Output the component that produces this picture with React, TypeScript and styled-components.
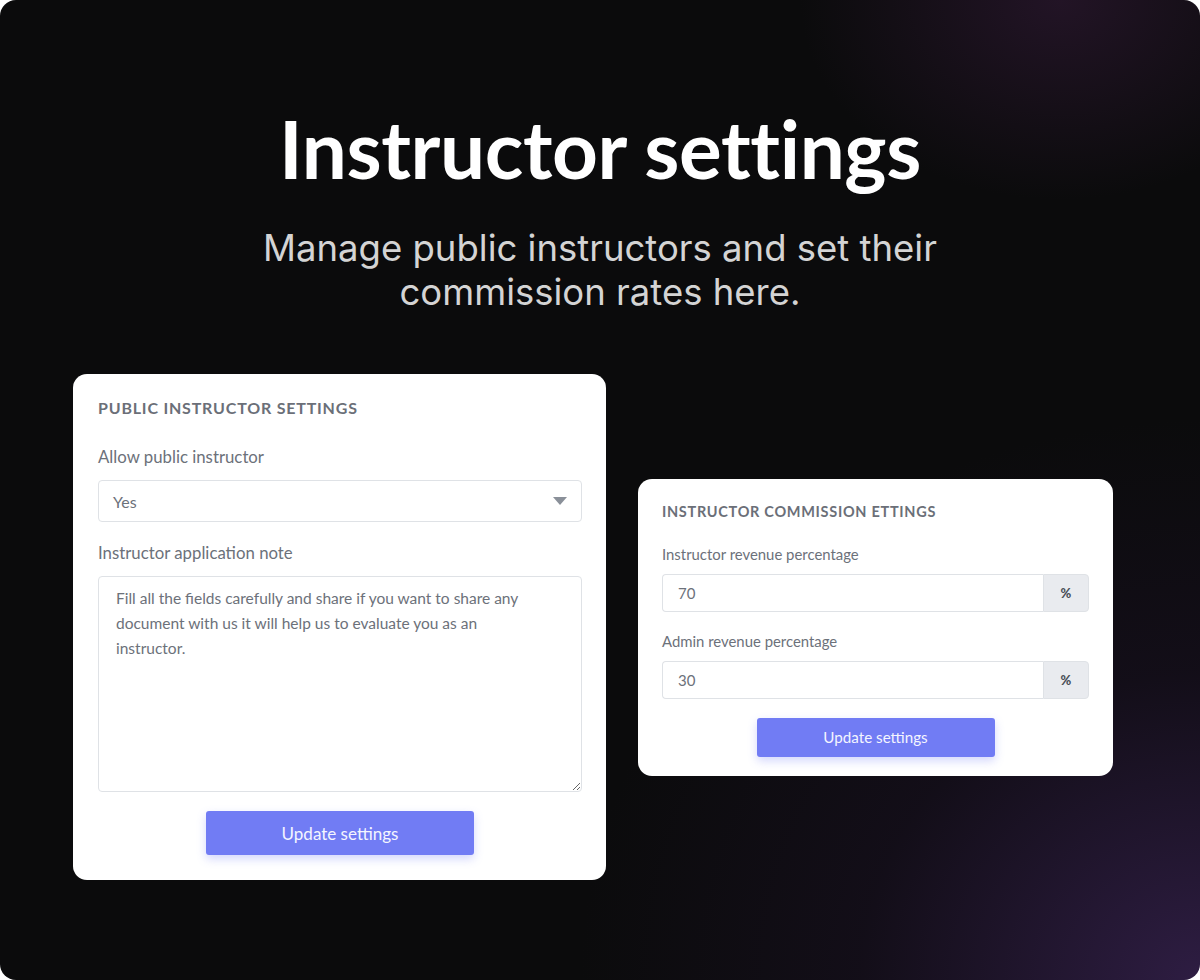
import React from 'react';
import styled, { createGlobalStyle } from 'styled-components';

const GlobalStyle = createGlobalStyle`
    html, body {
        margin: 0;
        padding: 0;
        background: #ffffff;
    }
    * {
        box-sizing: border-box;
    }
`;

function Field(props: { label: string; children: React.ReactNode; small?: boolean; spacing: number }) {
    const { label, children, small, spacing } = props;
    return (
        <FieldBox $spacing={spacing}>
            <Label $small={small}>{label}</Label>
            {children}
        </FieldBox>
    );
}

function PercentInput(props: { value: string }) {
    return (
        <InputGroup>
            <NumberInput readOnly defaultValue={props.value} />
            <Addon>%</Addon>
        </InputGroup>
    );
}

function App() {
    return (
        <>
            <GlobalStyle />
            <Stage>
                <Hero>
                    <Title>Instructor settings</Title>
                    <Subtitle>
                        Manage public instructors and set their
                        <br />
                        commission rates here.
                    </Subtitle>
                </Hero>
                <Cards>
                    <Card $width={533}>
                        <CardTitle>Public instructor settings</CardTitle>
                        <Field label="Allow public instructor" spacing={21}>
                            <SelectBox>
                                <span>Yes</span>
                                <Caret width="14" height="8" viewBox="0 0 14 8">
                                    <path d="M0 0h14L7 8z" fill="#8a9099" />
                                </Caret>
                            </SelectBox>
                        </Field>
                        <Field label="Instructor application note" spacing={19}>
                            <NoteArea
                                readOnly
                                defaultValue="Fill all the fields carefully and share if you want to share any document with us it will help us to evaluate you as an instructor."
                            />
                        </Field>
                        <ButtonRow>
                            <UpdateButton $width={268} $height={44}>Update settings</UpdateButton>
                        </ButtonRow>
                    </Card>
                    <Card $width={475} $small>
                        <CardTitle $small>Instructor commission ettings</CardTitle>
                        <Field label="Instructor revenue percentage" small spacing={20}>
                            <PercentInput value="70" />
                        </Field>
                        <Field label="Admin revenue percentage" small spacing={19}>
                            <PercentInput value="30" />
                        </Field>
                        <ButtonRow>
                            <UpdateButton $width={238} $height={39} $small>Update settings</UpdateButton>
                        </ButtonRow>
                    </Card>
                </Cards>
            </Stage>
        </>
    );
}

const Stage = styled.div`
    width: 1200px;
    height: 980px;
    border-radius: 16px;
    overflow: hidden;
    display: flex;
    flex-direction: column;
    background-color: #0b0b0c;
    background-image:
        radial-gradient(ellipse 620px 560px at 1200px 980px, rgba(52, 32, 76, 0.85), rgba(30, 18, 42, 0.4) 55%, rgba(11, 11, 12, 0) 100%),
        radial-gradient(ellipse 260px 200px at 1060px 0px, rgba(40, 22, 44, 0.8), rgba(11, 11, 12, 0) 100%);
`;

const Hero = styled.div`
    display: flex;
    flex-direction: column;
    align-items: center;
    padding-top: 100px;
`;

const Title = styled.h1`
    margin: 0;
    font-family: 'Lato', 'Noto Sans', sans-serif;
    font-weight: 700;
    font-size: 80px;
    line-height: 96px;
    color: #ffffff;
    letter-spacing: -0.4px;
`;

const Subtitle = styled.p`
    margin: 30px 0 0;
    font-family: 'Inter', 'Noto Sans', sans-serif;
    font-weight: 400;
    font-size: 36.5px;
    line-height: 44px;
    color: #d4d4d4;
    text-align: center;
`;

const Cards = styled.div`
    display: flex;
    align-items: center;
    gap: 32px;
    padding-left: 73px;
    margin-top: 60px;
`;

const Card = styled.div<{ $width: number; $small?: boolean }>`
    width: ${(p) => p.$width}px;
    background: #ffffff;
    border-radius: 14px;
    padding: ${(p) => (p.$small ? '24px 24px 19px' : '25px 24px 25px 25px')};
    display: flex;
    flex-direction: column;
    font-family: 'Lato', 'Noto Sans', sans-serif;
`;

const CardTitle = styled.div<{ $small?: boolean }>`
    font-size: ${(p) => (p.$small ? '14.5px' : '16px')};
    font-weight: 700;
    text-transform: uppercase;
    color: #6b6f78;
    letter-spacing: ${(p) => (p.$small ? '0.7px' : '0.8px')};
    line-height: 18px;
    margin-bottom: ${(p) => (p.$small ? '24px' : '30px')};
`;

const FieldBox = styled.div<{ $spacing: number }>`
    display: flex;
    flex-direction: column;
    margin-bottom: ${(p) => p.$spacing}px;
`;

const Label = styled.label<{ $small?: boolean }>`
    font-size: ${(p) => (p.$small ? '14.9px' : '16.8px')};
    color: #6c717a;
    line-height: ${(p) => (p.$small ? '18px' : '20px')};
    margin-bottom: ${(p) => (p.$small ? '11px' : '13px')};
`;

const SelectBox = styled.div`
    height: 42px;
    border: 1px solid #dfe2e6;
    border-radius: 4px;
    display: flex;
    align-items: center;
    justify-content: space-between;
    padding: 0 14px;
    font-size: 16px;
    color: #6c717a;
`;

const Caret = styled.svg`
    display: block;
`;

const NoteArea = styled.textarea`
    height: 216px;
    border: 1px solid #dfe2e6;
    border-radius: 4px;
    padding: 9px 60px 9px 17px;
    font-family: 'Lato', 'Noto Sans', sans-serif;
    font-size: 15.5px;
    line-height: 25px;
    color: #6c717a;
    resize: vertical;
    outline: none;
    margin: 0;
`;

const InputGroup = styled.div`
    display: flex;
    height: 38px;
`;

const NumberInput = styled.input`
    flex: 1;
    min-width: 0;
    height: 100%;
    border: 1px solid #dfe2e6;
    border-right: none;
    border-radius: 4px 0 0 4px;
    padding: 0 15px;
    font-family: 'Lato', 'Noto Sans', sans-serif;
    font-size: 15px;
    color: #6c717a;
    outline: none;
    margin: 0;
`;

const Addon = styled.span`
    width: 46px;
    height: 100%;
    display: flex;
    align-items: center;
    justify-content: center;
    background: #e9ebef;
    border: 1px solid #dfe2e6;
    border-radius: 0 4px 4px 0;
    font-size: 13px;
    font-weight: 900;
    color: #4a4f57;
`;

const ButtonRow = styled.div`
    display: flex;
    justify-content: center;
`;

const UpdateButton = styled.button<{ $width: number; $height: number; $small?: boolean }>`
    width: ${(p) => p.$width}px;
    height: ${(p) => p.$height}px;
    border: none;
    border-radius: 3px;
    background: #717cf4;
    color: #f4f5ff;
    font-family: 'Lato', 'Noto Sans', sans-serif;
    font-size: ${(p) => (p.$small ? '15.2px' : '17px')};
    box-shadow: 0 4px 10px rgba(113, 124, 244, 0.3);
    cursor: pointer;
`;

export default App;
